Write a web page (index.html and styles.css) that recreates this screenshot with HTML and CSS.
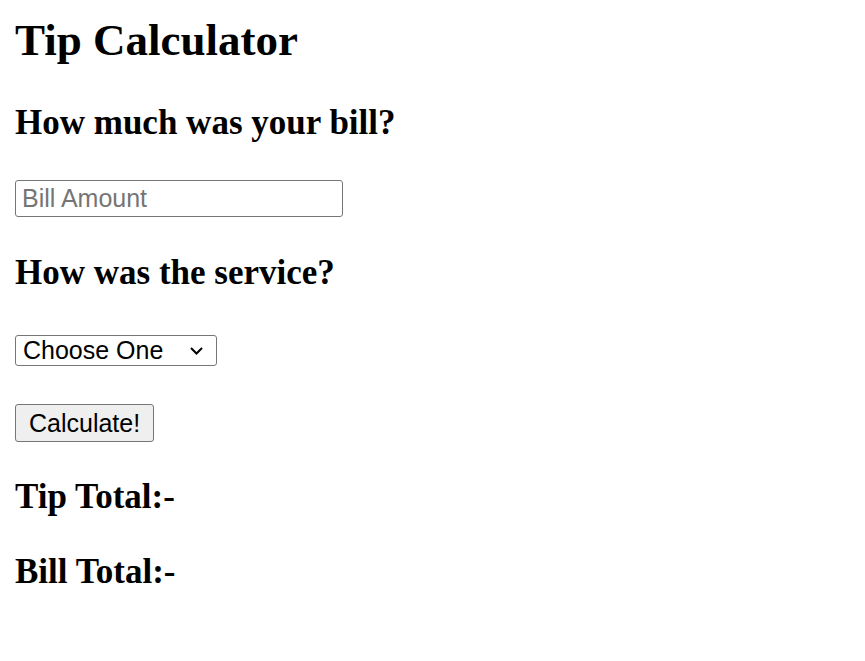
FILE: index.html
```html
<!DOCTYPE html>
<html>
<head>
    <title>Tip Calculator</title>
    <link rel="stylesheet" href="styles.css">
</head>
<body>
    <h1>Tip Calculator</h1>
    <h2 class="question">How much was your bill?</h2>
    <div class="field">
        <input type="text" id="billAmount" class="bill-input" placeholder="Bill Amount">
    </div>
    <h2 class="question service-q">How was the service?</h2>
    <div class="field select-field">
        <div class="select-wrap">
            <select id="service" class="service-select">
                <option value="0">Choose One</option>
                <option value="0.3">30% - Outstanding</option>
                <option value="0.2">20% - Good</option>
                <option value="0.15">15% - OK</option>
                <option value="0.1">10% - Bad</option>
            </select>
            <svg class="chevron" width="13" height="8" viewBox="0 0 13 8">
                <polyline points="1,1 6.5,6.5 12,1" fill="none" stroke="#000" stroke-width="2"/>
            </svg>
        </div>
    </div>
    <div class="field button-field">
        <button type="button" id="calculate" class="calc-btn">Calculate!</button>
    </div>
    <h2 class="total">Tip Total:-<span id="tipTotal"></span></h2>
    <h2 class="total">Bill Total:-<span id="billTotal"></span></h2>
</body>
</html>
```
FILE: styles.css
```css
body {
    font-family: 'Liberation Serif', 'Times New Roman', serif;
    margin: 0;
    padding: 0 15px;
    color: #000;
    background: #fff;
}
h1 {
    font-size: 45px;
    line-height: 52px;
    margin: 14px 0 0 0;
}
h2 {
    font-size: 35px;
    line-height: 40px;
    margin: 0;
}
.question {
    margin-top: 37px;
}
.service-q {
    margin-top: 36px;
}
.field {
    margin-top: 37px;
}
.select-field {
    margin-top: 42px;
}
.button-field {
    margin-top: 38px;
}
.total {
    margin-top: 35px;
}
input,
select,
button {
    font-family: 'Liberation Sans', Arial, sans-serif;
    font-size: 25px;
    color: #000;
}
.bill-input {
    display: block;
    width: 328px;
    height: 37px;
    box-sizing: border-box;
    border: 1px solid #767676;
    border-radius: 3px;
    padding: 1px 6px;
}
.bill-input::placeholder {
    color: #757575;
}
.select-wrap {
    position: relative;
    width: 202px;
}
.service-select {
    display: block;
    width: 202px;
    height: 31px;
    box-sizing: border-box;
    border: 1px solid #767676;
    border-radius: 3px;
    background: #fff;
    padding: 0 7px;
    line-height: 29px;
    appearance: none;
    -webkit-appearance: none;
}
.chevron {
    position: absolute;
    right: 14px;
    top: 12px;
    pointer-events: none;
}
.calc-btn {
    display: block;
    height: 38px;
    padding: 1px 13px;
    background: #efefef;
    border: 1px solid #767676;
    border-radius: 3px;
}
```
